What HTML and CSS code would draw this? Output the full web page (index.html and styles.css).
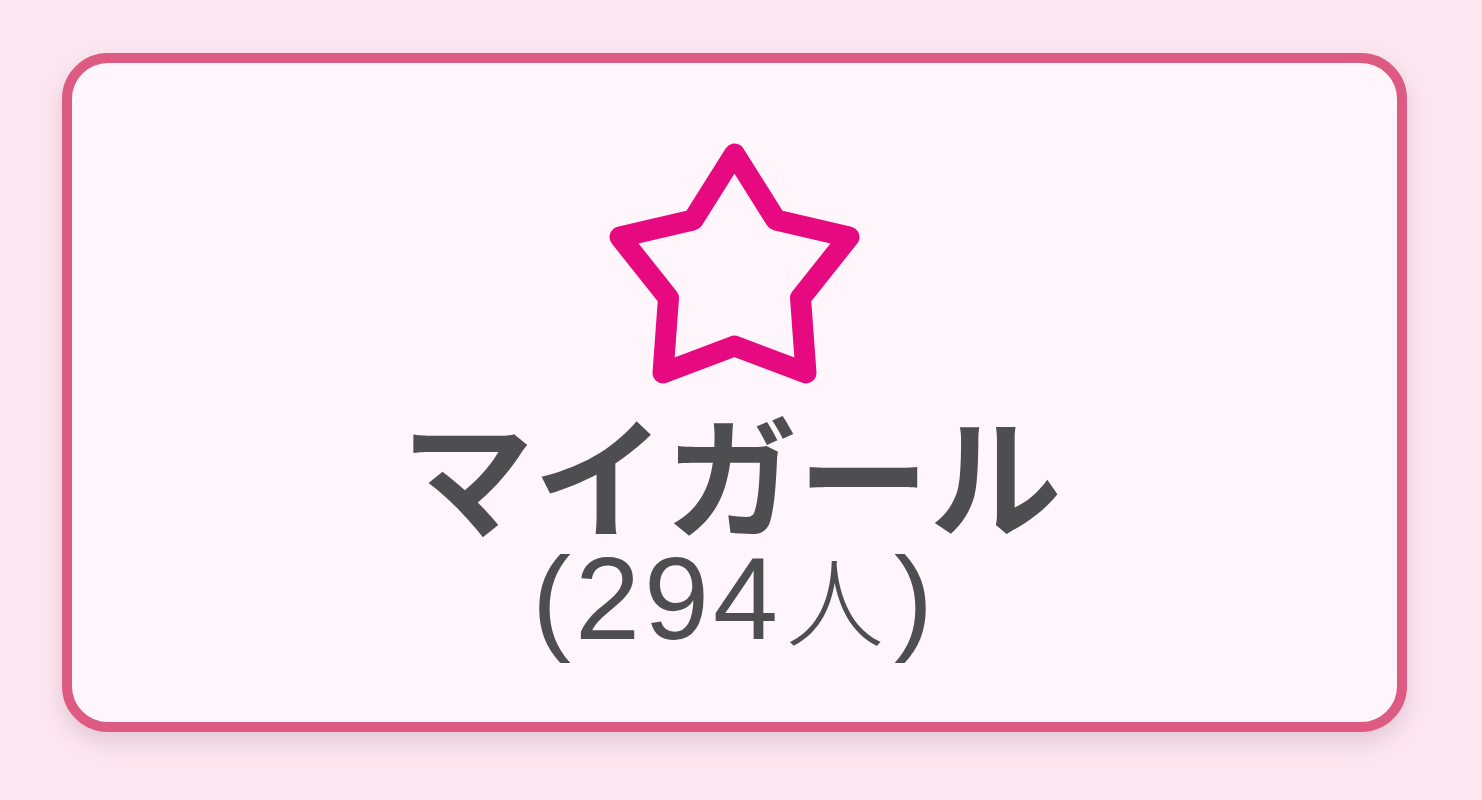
FILE: index.html
```html
<!DOCTYPE html>
<html lang="ja">
<head>
<meta charset="utf-8">
<title>マイガール</title>
<link rel="stylesheet" href="styles.css">
</head>
<body>
  <div class="page">
    <button class="card" type="button">
      <svg class="star" width="247" height="242" viewBox="0 0 247 242" aria-hidden="true">
        <polygon points="123.5,11 165,77 238,94 189.5,155 195,230 123.5,203 52,230 57.5,155 9,94 82,77" />
      </svg>
      <span class="title">マイガール</span>
      <span class="count">(294<span class="kanji">人</span>)</span>
    </button>
  </div>
</body>
</html>
```
FILE: styles.css
```css
html, body {
  margin: 0;
  padding: 0;
}
body {
  width: 1482px;
  height: 800px;
  overflow: hidden;
  background: #fce7f1;
}
.page {
  padding: 53px 75px 0 62px;
}
.card {
  box-sizing: border-box;
  width: 100%;
  height: 679px;
  margin: 0;
  border: 10px solid #dd5a82;
  border-radius: 46px;
  background: #fff6fb;
  box-shadow: 0 10px 22px rgba(140, 90, 110, 0.22);
  display: flex;
  flex-direction: column;
  align-items: center;
  padding: 80px 0 0 0;
  font: inherit;
  color: #4e4d50;
}
.star {
  display: block;
  overflow: visible;
}
.star polygon {
  fill: none;
  stroke: #e6097f;
  stroke-width: 21;
  stroke-linejoin: round;
}
.title {
  display: block;
  margin-top: 26px;
  font-family: "Noto Sans CJK JP", "Noto Sans", sans-serif;
  font-weight: 700;
  font-size: 132px;
  line-height: 120px;
  margin-left: -6px;
}
.count {
  display: block;
  margin-top: 13px;
  font-family: "Liberation Sans", "Noto Sans CJK JP", sans-serif;
  font-weight: 400;
  font-size: 117px;
  line-height: 104px;
  letter-spacing: 4px;
}
.kanji {
  font-family: "Noto Sans CJK JP", sans-serif;
  font-weight: 300;
  font-size: 98px;
  margin: 0 6px 0 4px;
}
```
